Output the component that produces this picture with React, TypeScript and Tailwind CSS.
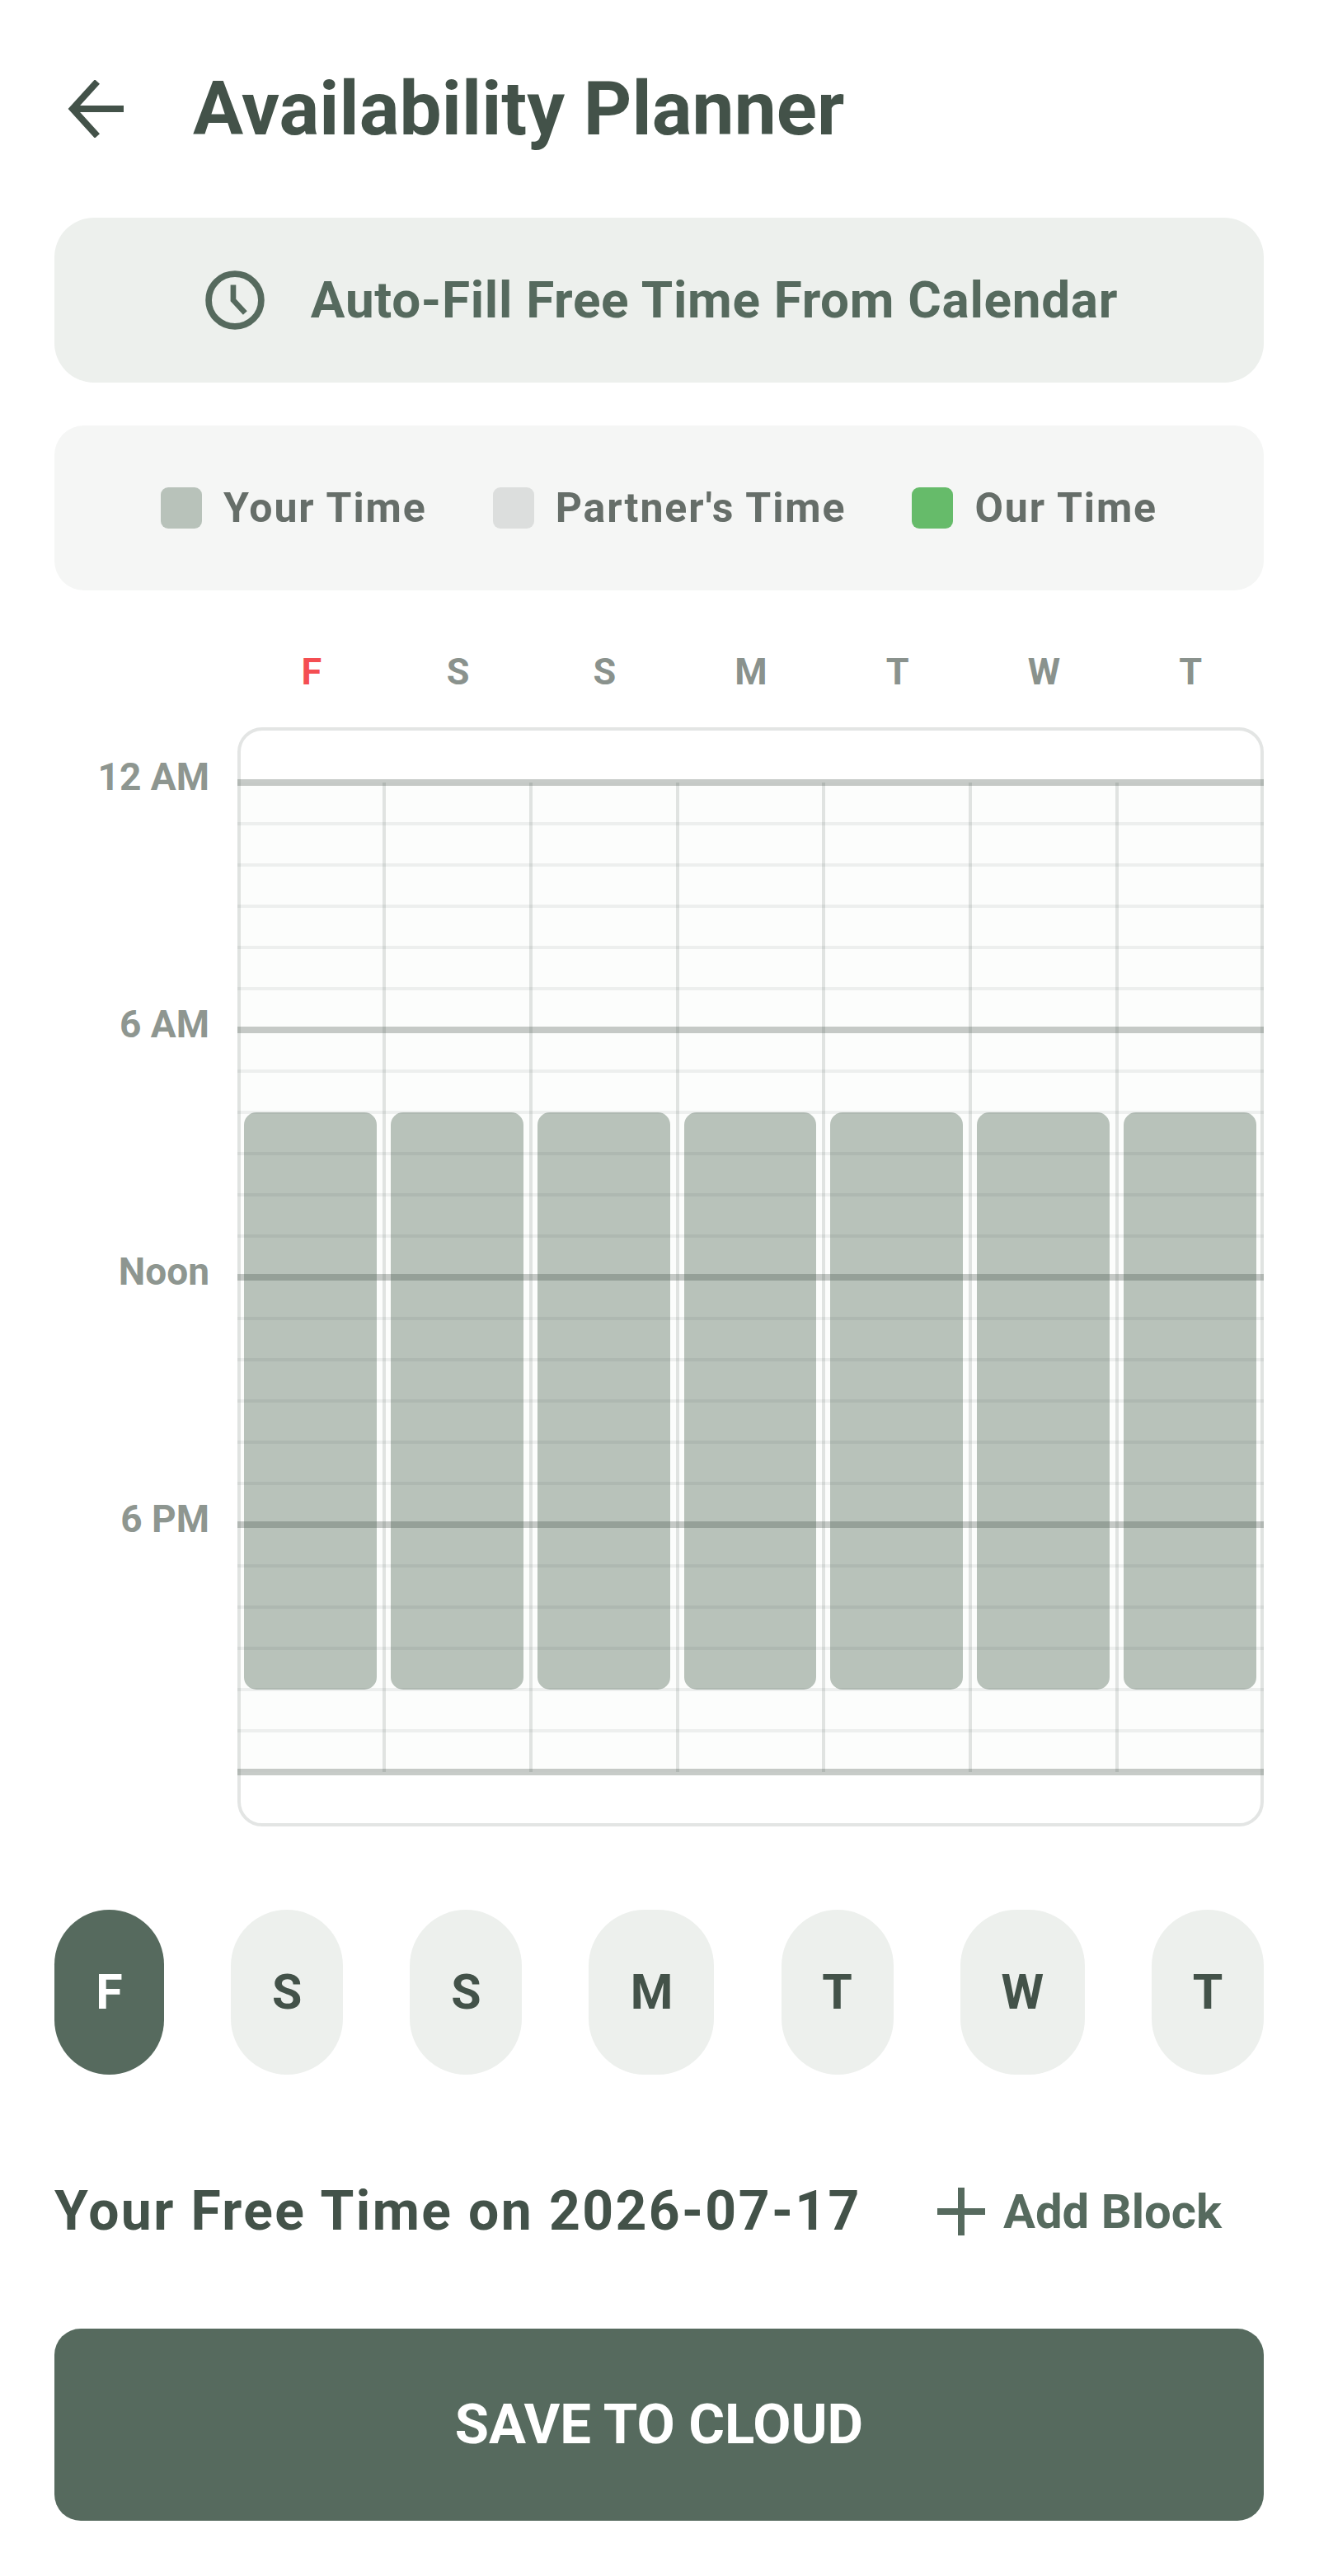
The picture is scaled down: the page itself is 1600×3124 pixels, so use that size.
import React from "react";

const days = ["F", "S", "S", "M", "T", "W", "T"];
const hourLabels = ["12 AM", "6 AM", "Noon", "6 PM"];
const rows = Array.from({ length: 24 }, (_, i) => i);

function Swatch({ color, label }: { color: string; label: string }) {
  return (
    <div className="flex items-center gap-[26px]">
      <div className={`h-[50px] w-[50px] rounded-[9px] ${color}`} />
      <span className="text-[50px] leading-[50px] font-bold tracking-[1.9px] text-[#666e69]">{label}</span>
    </div>
  );
}

export default function App() {
  return (
    <div className="min-h-[3124px] bg-white pr-[67px] pl-[66px] font-['Roboto','Liberation_Sans',sans-serif]">
      <header className="flex h-[264px] items-center">
        <svg viewBox="0 0 70 70" className="ml-[16px] h-[70px] w-[70px]" fill="none" stroke="#435249" strokeWidth="8">
          <path d="M68 35H6" />
          <path d="M36 2 6 35l30 33" />
        </svg>
        <h1 className="ml-[82px] text-[91px] leading-none font-bold tracking-[0.1px] text-[#435249]">Availability Planner</h1>
      </header>

      <button className="flex h-[200px] w-full items-center justify-center gap-[56px] rounded-[48px] bg-[#edf0ed] pl-[6px]">
        <svg viewBox="0 0 70 70" className="h-[72px] w-[72px]" fill="none" stroke="#566a5e" strokeWidth="7.5">
          <circle cx="35" cy="35" r="31" />
          <path d="M33 17v18l14 15" strokeWidth="6.5" />
        </svg>
        <span className="text-[62px] leading-none font-bold tracking-[0.7px] text-[#566a5e]">Auto-Fill Free Time From Calendar</span>
      </button>

      <div className="mt-[52px] flex h-[200px] items-center justify-center gap-[80px] rounded-[36px] bg-[#f5f6f5]">
        <Swatch color="bg-[#b8c2ba]" label="Your Time" />
        <Swatch color="bg-[#dcdedd]" label="Partner's Time" />
        <Swatch color="bg-[#66bb6a]" label="Our Time" />
      </div>

      <div className="mt-[76px] ml-[223px] grid h-[32px] grid-cols-7 items-center">
        {days.map((d, i) => (
          <div key={i} className={`text-center text-[45px] leading-none font-bold ${i === 0 ? "text-[#f44e52]" : "text-[#8a928d]"}`}>
            {d}
          </div>
        ))}
      </div>

      <div className="mt-[58px] flex">
        <div className="w-[222px] shrink-0 pt-[35px] pr-[34px] text-right">
          {hourLabels.map((h) => (
            <div key={h} className="h-[300px] text-[46px] leading-[50px] font-bold text-[#8e9690]">
              {h}
            </div>
          ))}
        </div>
        <div className="relative h-[1333px] flex-1 rounded-[30px] border-[4px] border-[#e3e5e4] bg-white">
          <div className="mx-[-4px] mt-[63px] grid h-[1200px] grid-cols-7 bg-[#fcfdfc]">
            {days.map((_, i) => (
              <div key={i} className="pt-[400px] pr-[9px] pl-[8px]">
                <div className="h-[700px] rounded-[15px] bg-[#b8c2ba]" />
              </div>
            ))}
          </div>
          <div className="absolute inset-x-[-4px] top-[63px] flex flex-col">
            {rows.map((r) => (
              <div key={r} className="relative h-[50px]">
                <div className={r % 6 === 0 ? "absolute inset-x-0 top-[-4px] h-[8px] bg-[#44524a]/30" : "absolute inset-x-0 top-[-2px] h-[4px] bg-[#44524a]/8"} />
              </div>
            ))}
            <div className="relative">
              <div className="absolute inset-x-0 top-[-4px] h-[8px] bg-[#44524a]/30" />
            </div>
          </div>
          <div className="absolute inset-x-[-4px] top-[63px] grid h-[1200px] grid-cols-7">
            {days.map((_, i) => (
              <div
                key={i}
                className={
                  i === 0
                    ? "border-l-[4px] border-[#44524a]/15"
                    : i === 6
                      ? "-ml-[2px] border-x-[4px] border-[#44524a]/15"
                      : "-ml-[2px] border-l-[4px] border-[#44524a]/15"
                }
              />
            ))}
          </div>
        </div>
      </div>

      <div className="mt-[101px] flex h-[200px] justify-between">
        {days.map((d, i) => (
          <div
            key={i}
            className={`flex items-center justify-center rounded-[68px] text-[59px] font-bold ${d === "M" ? "w-[152px]" : d === "W" ? "w-[151px]" : i === 0 ? "w-[133px]" : "w-[136px]"} ${i === 0 ? "bg-[#566a5e] text-white" : "bg-[#edf0ed] text-[#435249]"}`}
          >
            {d}
          </div>
        ))}
      </div>

      <div className="mt-[116px] flex h-[100px] items-center justify-between pr-[51px]">
        <span className="text-[66px] leading-none font-bold tracking-[2.4px] text-[#435249]">Your Free Time on 2026-07-17</span>
        <div className="flex items-center gap-[20px]">
          <svg viewBox="0 0 62 62" className="h-[62px] w-[62px]" fill="none" stroke="#566a5e" strokeWidth="8">
            <path d="M31 2v58M2 31h58" />
          </svg>
          <span className="text-[58px] leading-none font-bold text-[#566a5e]">Add Block</span>
        </div>
      </div>

      <button className="mt-[92px] flex h-[233px] w-full items-center justify-center rounded-[32px] bg-[#566a5e] text-[67px] font-bold text-white">
        SAVE TO CLOUD
      </button>
    </div>
  );
}
